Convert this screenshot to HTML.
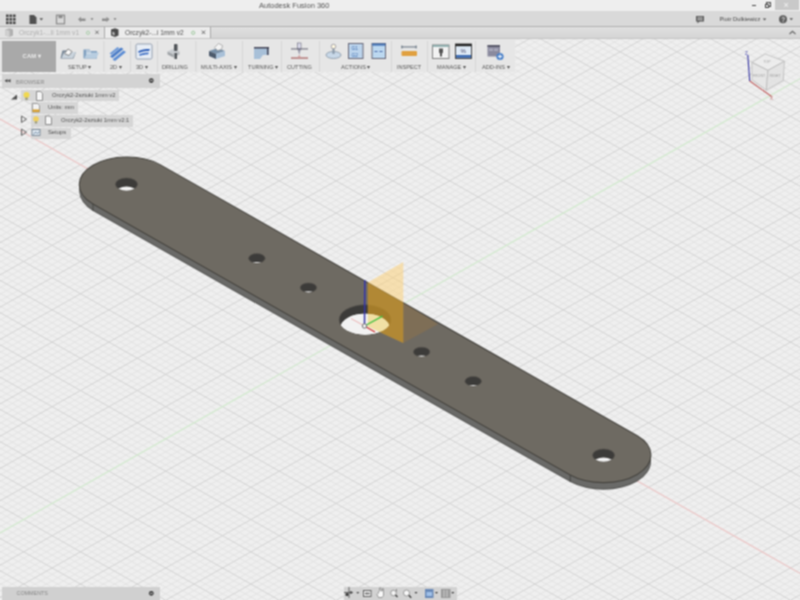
<!DOCTYPE html>
<html><head><meta charset="utf-8">
<style>
html,body{margin:0;padding:0;width:800px;height:600px;overflow:hidden;background:#ececec;font-family:"Liberation Sans",sans-serif;}
#wrap{position:absolute;left:0;top:0;width:800px;height:600px;filter:url(#bl);}
.a{position:absolute;}
.t{position:absolute;white-space:nowrap;line-height:1;}
</style></head><body>
<svg width="0" height="0" style="position:absolute"><filter id="bl" x="0" y="0" width="100%" height="100%" color-interpolation-filters="sRGB"><feConvolveMatrix order="3" kernelMatrix="1 2 1 2 4 2 1 2 1" divisor="16" edgeMode="duplicate"/></filter></svg>
<div id="wrap">
<svg width="800" height="600" viewBox="0 0 800 600" style="position:absolute;left:0;top:0" font-family="Liberation Sans, sans-serif">
<rect width="800" height="600" fill="#efefef"/>
<path d="M790.19 0.00L800.00 5.57M778.83 0.00L800.00 12.02M767.47 0.00L800.00 18.47M744.75 0.00L800.00 31.38M733.39 0.00L800.00 37.83M6.97 0.00L0.00 3.96M722.03 0.00L800.00 44.28M18.33 0.00L0.00 10.41M710.67 0.00L800.00 50.73M41.05 0.00L0.00 23.31M687.95 0.00L800.00 63.64M52.41 0.00L0.00 29.76M676.59 0.00L800.00 70.09M63.77 0.00L0.00 36.22M665.23 0.00L800.00 76.54M75.13 0.00L0.00 42.67M653.87 0.00L800.00 82.99M97.85 0.00L0.00 55.57M631.15 0.00L800.00 95.90M109.21 0.00L0.00 62.02M619.79 0.00L800.00 102.35M120.57 0.00L0.00 68.48M608.43 0.00L800.00 108.80M131.93 0.00L0.00 74.93M597.07 0.00L800.00 115.25M154.65 0.00L0.00 87.83M574.35 0.00L800.00 128.16M166.01 0.00L0.00 94.28M562.99 0.00L800.00 134.61M177.37 0.00L0.00 100.74M551.63 0.00L800.00 141.06M188.73 0.00L0.00 107.19M540.27 0.00L800.00 147.51M211.45 0.00L0.00 120.09M517.55 0.00L800.00 160.42M222.81 0.00L0.00 126.54M506.19 0.00L800.00 166.87M234.17 0.00L0.00 133.00M494.83 0.00L800.00 173.32M245.53 0.00L0.00 139.45M483.47 0.00L800.00 179.77M268.25 0.00L0.00 152.35M460.75 0.00L800.00 192.68M279.61 0.00L0.00 158.80M449.39 0.00L800.00 199.13M290.97 0.00L0.00 165.26M438.03 0.00L800.00 205.58M302.33 0.00L0.00 171.71M426.67 0.00L800.00 212.03M325.05 0.00L0.00 184.61M403.95 0.00L800.00 224.94M336.41 0.00L-0.00 191.06M392.59 0.00L800.00 231.39M347.77 0.00L0.00 197.52M381.23 0.00L800.00 237.84M359.13 0.00L0.00 203.97M369.87 0.00L800.00 244.29M381.85 0.00L0.00 216.87M347.15 0.00L800.00 257.20M393.21 0.00L0.00 223.32M335.79 0.00L800.00 263.65M404.57 0.00L0.00 229.78M324.43 0.00L800.00 270.10M415.93 0.00L0.00 236.23M313.07 0.00L800.00 276.55M438.65 0.00L-0.00 249.13M290.35 0.00L800.00 289.46M450.01 0.00L0.00 255.58M278.99 0.00L800.00 295.91M461.37 0.00L-0.00 262.04M267.63 0.00L800.00 302.36M472.73 0.00L0.00 268.49M256.27 0.00L800.00 308.81M495.45 0.00L0.00 281.39M233.55 0.00L800.00 321.72M506.81 0.00L0.00 287.84M222.19 0.00L800.00 328.17M518.17 0.00L0.00 294.30M210.83 0.00L800.00 334.62M529.53 0.00L0.00 300.75M199.47 0.00L800.00 341.07M552.25 0.00L0.00 313.65M176.75 0.00L800.00 353.98M563.61 0.00L0.00 320.10M165.39 0.00L800.00 360.43M574.97 0.00L0.00 326.56M154.03 0.00L800.00 366.88M586.33 0.00L0.00 333.01M142.67 0.00L800.00 373.33M609.05 0.00L0.00 345.91M119.95 0.00L800.00 386.24M620.41 0.00L0.00 352.36M108.59 0.00L800.00 392.69M631.77 0.00L0.00 358.82M97.23 0.00L800.00 399.14M643.13 0.00L0.00 365.27M85.87 0.00L800.00 405.59M665.85 0.00L0.00 378.17M63.15 0.00L800.00 418.50M677.21 0.00L0.00 384.62M51.79 0.00L800.00 424.95M688.57 0.00L0.00 391.08M40.43 0.00L800.00 431.40M699.93 0.00L0.00 397.53M29.07 0.00L800.00 437.85M722.65 0.00L0.00 410.43M6.35 0.00L800.00 450.76M734.01 0.00L0.00 416.88M0.00 2.84L800.00 457.21M745.37 0.00L0.00 423.34M0.00 9.30L800.00 463.66M756.73 0.00L0.00 429.79M-0.00 15.75L800.00 470.11M779.45 0.00L0.00 442.69M0.00 28.65L800.00 483.02M790.81 0.00L0.00 449.14M0.00 35.10L800.00 489.47M800.00 1.23L0.00 455.60M0.00 41.56L800.00 495.92M800.00 7.68L0.00 462.05M0.00 48.01L800.00 502.37M800.00 20.59L0.00 474.95M0.00 60.91L800.00 515.28M800.00 27.04L0.00 481.40M0.00 67.36L800.00 521.73M800.00 33.49L0.00 487.86M0.00 73.82L800.00 528.18M800.00 39.94L0.00 494.31M0.00 80.27L800.00 534.63M800.00 52.85L0.00 507.21M0.00 93.17L800.00 547.54M800.00 59.30L0.00 513.66M0.00 99.62L800.00 553.99M800.00 65.75L0.00 520.12M0.00 106.08L800.00 560.44M800.00 72.20L0.00 526.57M0.00 112.53L800.00 566.89M800.00 85.11L0.00 539.47M0.00 125.43L800.00 579.80M800.00 91.56L0.00 545.92M0.00 131.88L800.00 586.25M800.00 98.01L0.00 552.38M0.00 138.34L800.00 592.70M800.00 104.46L0.00 558.83M0.00 144.79L800.00 599.15M800.00 117.37L0.00 571.73M0.00 157.69L778.77 600.00M800.00 123.82L0.00 578.18M0.00 164.14L767.41 600.00M800.00 130.27L0.00 584.64M0.00 170.60L756.05 600.00M800.00 136.72L0.00 591.09M0.00 177.05L744.69 600.00M800.00 149.63L7.03 600.00M0.00 189.95L721.97 600.00M800.00 156.08L18.39 600.00M0.00 196.40L710.61 600.00M800.00 162.53L29.75 600.00M0.00 202.86L699.25 600.00M800.00 168.98L41.11 600.00M0.00 209.31L687.89 600.00M800.00 181.89L63.83 600.00M0.00 222.21L665.17 600.00M800.00 188.34L75.19 600.00M0.00 228.66L653.81 600.00M800.00 194.79L86.55 600.00M0.00 235.12L642.45 600.00M800.00 201.24L97.91 600.00M0.00 241.57L631.09 600.00M800.00 214.15L120.63 600.00M0.00 254.47L608.37 600.00M800.00 220.60L131.99 600.00M0.00 260.92L597.01 600.00M800.00 227.05L143.35 600.00M0.00 267.38L585.65 600.00M800.00 233.50L154.71 600.00M0.00 273.83L574.29 600.00M800.00 246.41L177.43 600.00M0.00 286.73L551.57 600.00M800.00 252.86L188.79 600.00M0.00 293.18L540.21 600.00M800.00 259.31L200.15 600.00M0.00 299.64L528.85 600.00M800.00 265.76L211.51 600.00M0.00 306.09L517.49 600.00M800.00 278.67L234.23 600.00M0.00 318.99L494.77 600.00M800.00 285.12L245.59 600.00M0.00 325.44L483.41 600.00M800.00 291.57L256.95 600.00M0.00 331.90L472.05 600.00M800.00 298.02L268.31 600.00M0.00 338.35L460.69 600.00M800.00 310.93L291.03 600.00M0.00 351.25L437.97 600.00M800.00 317.38L302.39 600.00M0.00 357.70L426.61 600.00M800.00 323.83L313.75 600.00M0.00 364.16L415.25 600.00M800.00 330.28L325.11 600.00M0.00 370.61L403.89 600.00M800.00 343.19L347.83 600.00M0.00 383.51L381.17 600.00M800.00 349.64L359.19 600.00M-0.00 389.96L369.81 600.00M800.00 356.09L370.55 600.00M0.00 396.42L358.45 600.00M800.00 362.54L381.91 600.00M-0.00 402.87L347.09 600.00M800.00 375.45L404.63 600.00M0.00 415.77L324.37 600.00M800.00 381.90L415.99 600.00M0.00 422.22L313.01 600.00M800.00 388.35L427.35 600.00M0.00 428.68L301.65 600.00M800.00 394.80L438.71 600.00M0.00 435.13L290.29 600.00M800.00 407.71L461.43 600.00M0.00 448.03L267.57 600.00M800.00 414.16L472.79 600.00M0.00 454.48L256.21 600.00M800.00 420.61L484.15 600.00M-0.00 460.94L244.85 600.00M800.00 427.06L495.51 600.00M0.00 467.39L233.49 600.00M800.00 439.97L518.23 600.00M0.00 480.29L210.77 600.00M800.00 446.42L529.59 600.00M0.00 486.74L199.41 600.00M800.00 452.87L540.95 600.00M0.00 493.20L188.05 600.00M800.00 459.32L552.31 600.00M0.00 499.65L176.69 600.00M800.00 472.23L575.03 600.00M0.00 512.55L153.97 600.00M800.00 478.68L586.39 600.00M0.00 519.00L142.61 600.00M800.00 485.13L597.75 600.00M0.00 525.46L131.25 600.00M800.00 491.58L609.11 600.00M0.00 531.91L119.89 600.00M800.00 504.49L631.83 600.00M0.00 544.81L97.17 600.00M800.00 510.94L643.19 600.00M0.00 551.26L85.81 600.00M800.00 517.39L654.55 600.00M0.00 557.72L74.45 600.00M800.00 523.84L665.91 600.00M0.00 564.17L63.09 600.00M800.00 536.75L688.63 600.00M0.00 577.07L40.37 600.00M800.00 543.20L699.99 600.00M0.00 583.52L29.01 600.00M800.00 549.65L711.35 600.00M0.00 589.98L17.65 600.00M800.00 556.10L722.71 600.00M0.00 596.43L6.29 600.00M800.00 569.01L745.43 600.00M800.00 575.46L756.79 600.00M800.00 581.91L768.15 600.00M800.00 588.36L779.51 600.00" stroke="#e0e0e0" stroke-width="0.8" fill="none"/>
<path d="M756.11 0.00L800.00 24.93M29.69 0.00L0.00 16.86M699.31 0.00L800.00 57.19M86.49 0.00L0.00 49.12M642.51 0.00L800.00 89.45M143.29 0.00L0.00 81.38M585.71 0.00L800.00 121.71M200.09 0.00L0.00 113.64M528.91 0.00L800.00 153.97M256.89 0.00L0.00 145.90M472.11 0.00L800.00 186.23M313.69 0.00L0.00 178.16M415.31 0.00L800.00 218.49M370.49 0.00L0.00 210.42M358.51 0.00L800.00 250.75M427.29 0.00L0.00 242.68M301.71 0.00L800.00 283.01M484.09 0.00L0.00 274.94M244.91 0.00L800.00 315.27M540.89 0.00L0.00 307.20M188.11 0.00L800.00 347.53M597.69 0.00L0.00 339.46M131.31 0.00L800.00 379.79M654.49 0.00L0.00 371.72M74.51 0.00L800.00 412.05M711.29 0.00L0.00 403.98M17.71 0.00L800.00 444.31M768.09 0.00L0.00 436.24M0.00 22.20L800.00 476.57M800.00 14.13L0.00 468.50M0.00 54.46L800.00 508.83M800.00 46.39L0.00 500.76M0.00 86.72L800.00 541.09M800.00 78.65L0.00 533.02M0.00 118.98L800.00 573.35M800.00 110.91L0.00 565.28M0.00 151.24L790.13 600.00M800.00 143.17L0.00 597.54M0.00 183.50L733.33 600.00M800.00 175.43L52.47 600.00M0.00 215.76L676.53 600.00M800.00 207.69L109.27 600.00M0.00 248.02L619.73 600.00M800.00 239.95L166.07 600.00M0.00 280.28L562.93 600.00M800.00 272.21L222.87 600.00M0.00 312.54L506.13 600.00M800.00 304.47L279.67 600.00M0.00 344.80L449.33 600.00M800.00 336.73L336.47 600.00M0.00 377.06L392.53 600.00M800.00 368.99L393.27 600.00M0.00 409.32L335.73 600.00M800.00 401.25L450.07 600.00M0.00 441.58L278.93 600.00M800.00 433.51L506.87 600.00M0.00 473.84L222.13 600.00M800.00 465.77L563.67 600.00M0.00 506.10L165.33 600.00M800.00 498.03L620.47 600.00M0.00 538.36L108.53 600.00M800.00 530.29L677.27 600.00M0.00 570.62L51.73 600.00M800.00 562.55L734.07 600.00M800.00 594.81L790.87 600.00" stroke="#d2d2d2" stroke-width="1.0" fill="none"/>
<path d="M0.00 118.98L800.00 573.35" stroke="#eec8c8" stroke-width="1.2"/>
<path d="M800.00 78.65L0.00 533.02" stroke="#d4ecd0" stroke-width="1.2"/>
<path d="M160.02 171.63L637.27 442.73A47.80 27.60 0 0 1 570.23 482.07L92.98 210.97A47.80 27.60 0 0 1 160.02 171.63Z" fill="#5d5d5b"/>
<path d="M160.02 170.13L637.27 441.23A47.80 27.60 0 0 1 570.23 480.57L92.98 209.47A47.80 27.60 0 0 1 160.02 170.13Z" fill="#6a6a68"/>
<path d="M160.02 164.63L637.27 435.73A47.80 27.60 0 0 1 570.23 475.07L92.98 203.97A47.80 27.60 0 0 1 160.02 164.63Z" fill="#6e6a62" stroke="#46443f" stroke-width="1.1"/>
<path d="M92.98 203.97L92.98 210.97" stroke="#3e3d3a" stroke-width="0.8"/>
<path d="M570.23 475.07L570.23 482.07" stroke="#3e3d3a" stroke-width="0.8"/>
<ellipse cx="126.50" cy="184.30" rx="11.00" ry="6.35" fill="#3c3b39" stroke="#55534e" stroke-width="0.6"/>
<clipPath id="h0"><ellipse cx="126.50" cy="184.30" rx="11.00" ry="6.35"/></clipPath>
<ellipse clip-path="url(#h0)" cx="126.50" cy="192.50" rx="10.45" ry="6.03" fill="#f2f2f2"/>
<ellipse cx="256.86" cy="258.35" rx="8.25" ry="4.76" fill="#3c3b39" stroke="#55534e" stroke-width="0.6"/>
<clipPath id="h148"><ellipse cx="256.86" cy="258.35" rx="8.25" ry="4.76"/></clipPath>
<ellipse clip-path="url(#h148)" cx="256.86" cy="266.55" rx="7.84" ry="4.53" fill="#f2f2f2"/>
<ellipse cx="308.44" cy="287.65" rx="8.25" ry="4.76" fill="#3c3b39" stroke="#55534e" stroke-width="0.6"/>
<clipPath id="h206"><ellipse cx="308.44" cy="287.65" rx="8.25" ry="4.76"/></clipPath>
<ellipse clip-path="url(#h206)" cx="308.44" cy="295.85" rx="7.84" ry="4.53" fill="#f2f2f2"/>
<ellipse cx="365.04" cy="319.80" rx="25.90" ry="14.95" fill="#3c3b39" stroke="#55534e" stroke-width="0.6"/>
<clipPath id="h271"><ellipse cx="365.04" cy="319.80" rx="25.90" ry="14.95"/></clipPath>
<ellipse clip-path="url(#h271)" cx="365.04" cy="328.00" rx="24.60" ry="14.21" fill="#f2f2f2"/>
<ellipse cx="421.63" cy="351.95" rx="8.25" ry="4.76" fill="#3c3b39" stroke="#55534e" stroke-width="0.6"/>
<clipPath id="h335"><ellipse cx="421.63" cy="351.95" rx="8.25" ry="4.76"/></clipPath>
<ellipse clip-path="url(#h335)" cx="421.63" cy="360.15" rx="7.84" ry="4.53" fill="#f2f2f2"/>
<ellipse cx="473.21" cy="381.25" rx="8.25" ry="4.76" fill="#3c3b39" stroke="#55534e" stroke-width="0.6"/>
<clipPath id="h393"><ellipse cx="473.21" cy="381.25" rx="8.25" ry="4.76"/></clipPath>
<ellipse clip-path="url(#h393)" cx="473.21" cy="389.45" rx="7.84" ry="4.53" fill="#f2f2f2"/>
<ellipse cx="603.57" cy="455.30" rx="11.00" ry="6.35" fill="#3c3b39" stroke="#55534e" stroke-width="0.6"/>
<clipPath id="h542"><ellipse cx="603.57" cy="455.30" rx="11.00" ry="6.35"/></clipPath>
<ellipse clip-path="url(#h542)" cx="603.57" cy="463.50" rx="10.45" ry="6.03" fill="#f2f2f2"/>
<clipPath id="ptop"><path d="M160.02 164.63L637.27 435.73A47.80 27.60 0 0 1 570.23 475.07L92.98 203.97A47.80 27.60 0 0 1 160.02 164.63Z"/></clipPath>
<path d="M367.75 282.5L403.3 262L403.3 343L367.75 326.5Z" fill="rgb(254,208,114)" fill-opacity="0.5"/>
<path clip-path="url(#ptop)" d="M367.75 282.5L403.3 262L403.3 343L367.75 326.5Z" fill="rgb(171,116,0)" fill-opacity="0.5"/>
<path clip-path="url(#ptop)" d="M403.3 302.5L438 324L403.3 343Z" fill="rgb(165,118,58)" fill-opacity="0.3"/>
<clipPath id="hl"><ellipse cx="365.04" cy="328.00" rx="24.60" ry="14.21"/></clipPath>
<g clip-path="url(#h271)"><g clip-path="url(#hl)"><rect x="330" y="290" width="80" height="60" fill="#f2f2f2"/>
<path d="M367.75 282.5L403.3 262L403.3 343L367.75 326.5Z" fill="rgb(240,210,100)" fill-opacity="0.55"/></g></g>
<path d="M351 318.5L364.5 326.0" stroke="#e8a0a0" stroke-width="0.8"/>
<path d="M364.5 326.0L364.8 280.3" stroke="#3434a8" stroke-width="1.5"/>
<path d="M364.5 326.0L382.5 316.2" stroke="#40c040" stroke-width="1.4"/>
<path d="M364.5 326.0L375 332" stroke="#d03030" stroke-width="1.4"/>
<circle cx="364.5" cy="326.0" r="2.2" fill="#f4f4f4" stroke="#606060" stroke-width="0.9"/>
<g opacity="0.9">
<path d="M751.9 62.4L765.2 53.9L784.4 61.3L767.9 70.4Z" fill="#ededed" stroke="#b4b4b4" stroke-width="0.8"/>
<path d="M751.9 62.4L767.9 70.4L766.3 90.1L751.9 79.5Z" fill="#e6e6e6" stroke="#b4b4b4" stroke-width="0.8"/>
<path d="M767.9 70.4L784.4 61.3L783.3 80.5L766.3 90.1Z" fill="#e2e2e2" stroke="#b4b4b4" stroke-width="0.8"/>
<text x="767" y="62.5" font-size="3.5" fill="#999" text-anchor="middle" transform="">TOP</text>
<text x="759" y="77" font-size="3.6" fill="#999" text-anchor="middle">FRONT</text>
<text x="775" y="77" font-size="3.6" fill="#999" text-anchor="middle">RIGHT</text>
</g>
<path d="M749.7 81L747.8 55" stroke="#3030a0" stroke-width="1.1"/>
<path d="M749.7 81L771.6 96.5" stroke="#c06060" stroke-width="1.1"/>
<text x="745" y="55" font-size="4.5" fill="#5050b0">Z</text>
<text x="770" y="100" font-size="4.5" fill="#c07070">X</text>
</svg>
<!-- title bar -->
<div class="a" style="left:0;top:0;width:800px;height:11px;background:#eeeeee"></div>
<div class="t" style="left:259px;top:1.5px;font-size:7.5px;color:#555">Autodesk Fusion 360</div>
<div class="a" style="left:752px;top:5px;width:4px;height:1.2px;background:#444"></div>
<div class="a" style="left:766px;top:2px;width:4.5px;height:4.5px;border:1px solid #444;border-top-width:1.5px;box-sizing:border-box"></div><div class="a" style="left:764.5px;top:3.5px;width:4.5px;height:4.5px;border:1px solid #444;border-top-width:1.5px;box-sizing:border-box;background:#eee"></div>
<div class="a" style="left:775px;top:0;width:24px;height:10px;background:#c9c9c9"></div>
<div class="t" style="left:783.5px;top:0.5px;font-size:9px;color:#f4f4f4">&#215;</div>
<!-- toolbar -->
<div class="a" style="left:0;top:11px;width:800px;height:15px;background:#d9d9d9"></div>
<div class="a" style="left:0;top:26px;width:800px;height:1px;background:#b0b0b0"></div>
<svg class="a" style="left:0;top:11px" width="800" height="16">
 <g fill="#484848">
  <rect x="6" y="3.5" width="2.6" height="2.6"/><rect x="9.5" y="3.5" width="2.6" height="2.6"/><rect x="13" y="3.5" width="2.6" height="2.6"/>
  <rect x="6" y="7" width="2.6" height="2.6"/><rect x="9.5" y="7" width="2.6" height="2.6"/><rect x="13" y="7" width="2.6" height="2.6"/>
  <rect x="6" y="10.5" width="2.6" height="2.6"/><rect x="9.5" y="10.5" width="2.6" height="2.6"/><rect x="13" y="10.5" width="2.6" height="2.6"/>
 </g>
 <path d="M29.5 4h4.5l2.5 2.5v6.5h-7z" fill="#505050"/>
 <path d="M39.5 7.2h3.6l-1.8 2.2z" fill="#505050"/>
 <rect x="56.5" y="4.2" width="8" height="8.6" fill="none" stroke="#8a8a8a" stroke-width="1.2"/>
 <rect x="58.5" y="4.2" width="4" height="3" fill="#8a8a8a"/>
 <path d="M78 8.3l3-2.5v1.6h4.5v2.6h-4.5v1.3z" fill="#8f8f8f"/>
 <path d="M90.5 7.3h3l-1.5 2z" fill="#7a7a7a"/>
 <path d="M109.5 8.3l-3-2.5v1.6h-4.5v2.6h4.5v1.3z" fill="#8f8f8f"/>
 <path d="M113.5 7.3h3l-1.5 2z" fill="#7a7a7a"/>
 <path d="M696 5h8v5.5h-4.5l-2 2v-2h-1.5z" fill="#5a5a5a"/>
 <rect x="697.3" y="6.3" width="5.4" height="0.9" fill="#d9d9d9"/><rect x="697.3" y="8.2" width="5.4" height="0.9" fill="#d9d9d9"/>
 <circle cx="783" cy="8.3" r="4" fill="#5c5c5c"/>
 <text x="781.3" y="10.8" font-size="6.5" fill="#ddd" font-weight="bold">?</text>
 <path d="M789.5 7.3h3.5l-1.75 2z" fill="#505050"/>
 <path d="M762.8 7.6h3.5l-1.75 2z" fill="#505050"/>
</svg>
<div class="t" style="left:719.5px;top:17.2px;font-size:5.8px;color:#4a4a4a">Piotr Dulkiewicz</div>
<!-- tabs row -->
<div class="a" style="left:0;top:27px;width:800px;height:11px;background:linear-gradient(#e0e0e0,#d4d4d4)"></div>
<div class="a" style="left:0;top:27px;width:104px;height:11px;background:#e2e2e2"></div>
<div class="a" style="left:104px;top:27px;width:1px;height:11px;background:#a8a8a8"></div>
<div class="a" style="left:105px;top:27px;width:105px;height:11px;background:#ececec"></div>
<div class="a" style="left:210px;top:27px;width:1px;height:11px;background:#a8a8a8"></div>
<div class="a" style="left:0;top:38px;width:800px;height:1px;background:#c4c4c4"></div>
<svg class="a" style="left:0;top:27px" width="800" height="12">
 <path d="M5.5 2.5l4-1.2 3.5 1.2v6l-3.5 1.5-4-1.5z" fill="#b0b0b0"/><path d="M5.5 2.5l4 1.3v6.5l-4-1.8z" fill="#d0d0d0"/>
 <path d="M111 2.5l4-1.2 3.5 1.2v6l-3.5 1.5-4-1.5z" fill="#4a4a4a"/><path d="M112.3 4.5l2.3 1v3l-2.3-1z" fill="#bbb"/>
 <circle cx="88" cy="5.8" r="1.6" fill="none" stroke="#9cc89c" stroke-width="0.8"/>
 <circle cx="193.2" cy="5.8" r="1.6" fill="none" stroke="#8cc08c" stroke-width="0.8"/>
 <path d="M95.3 3.6l3.4 3.4M98.7 3.6l-3.4 3.4" stroke="#666" stroke-width="0.9"/>
 <path d="M201.8 3.6l3.4 3.4M205.2 3.6l-3.4 3.4" stroke="#555" stroke-width="0.9"/>
 <path d="M789.5 7l3-2.7 3 2.7" fill="none" stroke="#666" stroke-width="1.1"/>
</svg>
<div class="t" style="left:19px;top:30.3px;font-size:6.6px;color:#b0b0b0">Orczyk1-...li 1mm v1</div>
<div class="t" style="left:125px;top:30.3px;font-size:6.6px;color:#505050">Orczyk2-...i 1mm v2</div>
<!-- ribbon -->
<div class="a" style="left:0;top:39px;width:515px;height:33px;background:#e6e6e6"></div>
<div class="a" style="left:2px;top:41px;width:54px;height:31px;background:#a9a9a9"></div>
<div class="t" style="left:22.5px;top:54.3px;font-size:5.8px;color:#ececec;font-weight:bold;letter-spacing:0.2px">CAM &#9662;</div>
<div id="seps"></div>
<svg class="a" style="left:0;top:39px" width="520" height="34">
 <g fill="#d2d2d2">
  <rect x="103.5" y="2" width="0.8" height="31"/><rect x="130" y="2" width="0.8" height="31"/><rect x="157" y="2" width="0.8" height="31"/>
  <rect x="195.5" y="2" width="0.8" height="31"/><rect x="242" y="2" width="0.8" height="31"/><rect x="281" y="2" width="0.8" height="31"/>
  <rect x="319" y="2" width="0.8" height="31"/><rect x="391" y="2" width="0.8" height="31"/><rect x="427" y="2" width="0.8" height="31"/>
  <rect x="475" y="2" width="0.8" height="31"/>
 </g>
 <!-- setup icons -->
 <path d="M60.5 19.5l2-8h7l1.5 1.5h5l-2.5 6.5z" fill="#6e7e8e"/>
 <path d="M61.5 19l2.5-6h12l-3 6z" fill="#c9d3dc"/>
 <path d="M64.5 14.5l3.5-4.5 4 2.5-3 4z" fill="#fafafa" stroke="#444" stroke-width="0.6"/>
 <path d="M83.5 19.5v-9h6l1.5 1.5h6v7.5z" fill="#7f9fbf"/>
 <path d="M84.5 19l2.5-5.5h12l-2.5 5.5z" fill="#b8cde0"/>
 <rect x="86" y="11.5" width="5" height="1" fill="#e8eef4"/><rect x="86" y="13.5" width="5" height="1" fill="#e8eef4"/>
 <!-- 2D -->
 <path d="M110 17.5l11-9 2.5 1.5-11 9z" fill="#4a7cc8"/>
 <path d="M112.5 20.5l11-9 2.5 1.5-11 9z" fill="#5b8cd4"/>
 <path d="M109.5 14.5l8-6.5 2 1.2-8 6.5z" fill="#6f9ad8"/>
 <!-- 3D -->
 <rect x="136" y="5" width="16" height="15" rx="1.5" fill="#e8eef6" stroke="#8a96a8" stroke-width="0.9"/>
 <path d="M138 12.5c3-2 7-2.5 12-2.5l-1 2c-4 0-7 .5-10 2z" fill="#3060b8"/>
 <path d="M139 15.5c3-1.5 6-2 10-2l-1 2c-3 0-6 .5-8 1.5z" fill="#4a78c8"/>
 <!-- drilling -->
 <path d="M167.5 12.5l6-3 6 3-6 3z" fill="#c8ccd0"/>
 <path d="M167.5 12.5v3l6 3v-3z" fill="#a0a4a8"/><path d="M179.5 12.5v3l-6 3v-3z" fill="#b4b8bc"/>
 <rect x="174" y="5" width="3.5" height="7" rx="1" fill="#505458"/>
 <rect x="174.5" y="14" width="2.5" height="6" fill="#505458"/>
 <!-- multi-axis -->
 <path d="M209 12l9-3 7 3-9 3z" fill="#7890a8"/>
 <path d="M209 12v5l7 3v-5z" fill="#4c5a6c"/><path d="M225 12v5l-9 3v-5z" fill="#a8c0d8"/>
 <path d="M214.5 8.5l4-4 4 2-1 4-4 1z" fill="#f4f4f4" stroke="#888" stroke-width="0.6"/>
 <!-- turning -->
 <path d="M254 8h15v8h-6l-3 4h-6z" fill="#a8c0d8"/>
 <rect x="254" y="8" width="15" height="1.5" fill="#445"/>
 <rect x="267" y="9" width="1.5" height="7" fill="#445"/>
 <!-- cutting -->
 <rect x="297.5" y="4" width="3.5" height="6" fill="#dde" stroke="#667" stroke-width="0.6"/>
 <path d="M297.5 10h3.5l-1.75 6z" fill="#99a"/>
 <rect x="291" y="9.5" width="17" height="0.9" fill="#556"/>
 <rect x="291" y="18.5" width="17" height="1.1" fill="#a05050"/>
 <path d="M299.25 16l-2 2.5h4z" fill="#d0a0a0"/>
 <!-- actions -->
 <ellipse cx="333.5" cy="16" rx="7.5" ry="3.5" fill="#c8d8e8" stroke="#7a8a9a" stroke-width="0.7"/>
 <rect x="332.5" y="8" width="2" height="7" fill="#8898a8"/>
 <circle cx="333.5" cy="7.5" r="2.3" fill="#fff8e0" stroke="#778" stroke-width="0.6"/>
 <rect x="348.5" y="4.5" width="14.5" height="15" fill="#bcd4ec" stroke="#667" stroke-width="1"/>
 <text x="351.5" y="10.8" font-size="4.8" fill="#4070b0">G1</text><text x="351.5" y="17.5" font-size="4.8" fill="#4070b0">G2</text>
 <rect x="372" y="4.5" width="13.5" height="15" fill="#bcd8f0" stroke="#667" stroke-width="1"/>
 <rect x="372" y="4.5" width="13.5" height="2.2" fill="#4a78b8"/>
 <rect x="374.5" y="12" width="3" height="1" fill="#4a68a8"/><rect x="379.5" y="12" width="3" height="1" fill="#4a68a8"/>
 <!-- inspect -->
 <rect x="401.5" y="7.5" width="15" height="0.9" fill="#506070"/>
 <rect x="401.5" y="6.5" width="0.9" height="3" fill="#506070"/><rect x="415.6" y="6.5" width="0.9" height="3" fill="#506070"/>
 <rect x="401.5" y="12" width="15.5" height="5" rx="1" fill="#e0a040"/>
 <!-- manage -->
 <rect x="432.5" y="6" width="16.5" height="13.5" fill="#f2f2f2" stroke="#777" stroke-width="0.9"/>
 <rect x="432.5" y="6" width="16.5" height="1.8" fill="#8aa"/>
 <path d="M439 9.5h4v4l-1 1v3h-2v-3l-1-1z" fill="#555"/>
 <rect x="455.5" y="5" width="16" height="14.5" fill="#dfeaf6" stroke="#333" stroke-width="0.9"/>
 <rect x="455.5" y="5" width="16" height="2.2" fill="#222"/>
 <rect x="456" y="16" width="15" height="2.8" fill="#3c6ab0"/>
 <text x="460.5" y="14.3" font-size="6" fill="#446">%</text>
 <!-- add-ins -->
 <rect x="487.5" y="6" width="12.5" height="11.5" fill="#8a8a9e"/>
 <rect x="487.5" y="6" width="12.5" height="2" fill="#5a5a6a"/>
 <rect x="489" y="9.5" width="4" height="2.5" fill="#a8a8ba"/><rect x="494" y="9.5" width="4" height="2.5" fill="#a8a8ba"/>
 <circle cx="500" cy="17.5" r="3.6" fill="#4a80c8"/>
 <rect x="499.5" y="15.5" width="1" height="4" fill="#fff"/><rect x="498" y="17" width="4" height="1" fill="#fff"/>
</svg>
<div class="t" style="left:68px;top:64.5px;font-size:5.6px;color:#555">SETUP &#9662;</div>
<div class="t" style="left:110px;top:64.5px;font-size:5.6px;color:#555">2D &#9662;</div>
<div class="t" style="left:136px;top:64.5px;font-size:5.6px;color:#555">3D &#9662;</div>
<div class="t" style="left:162px;top:64.5px;font-size:5.6px;color:#555">DRILLING</div>
<div class="t" style="left:201px;top:64.5px;font-size:5.6px;color:#555">MULTI-AXIS &#9662;</div>
<div class="t" style="left:248px;top:64.5px;font-size:5.6px;color:#555">TURNING &#9662;</div>
<div class="t" style="left:287px;top:64.5px;font-size:5.6px;color:#555">CUTTING</div>
<div class="t" style="left:341px;top:64.5px;font-size:5.6px;color:#555">ACTIONS &#9662;</div>
<div class="t" style="left:397px;top:64.5px;font-size:5.6px;color:#555">INSPECT</div>
<div class="t" style="left:437px;top:64.5px;font-size:5.6px;color:#555">MANAGE &#9662;</div>
<div class="t" style="left:482px;top:64.5px;font-size:5.6px;color:#555">ADD-INS &#9662;</div>

<!-- browser -->
<div class="a" style="left:2px;top:73.5px;width:158px;height:14px;background:#d3d3d3"></div>
<div class="t" style="left:16px;top:79.5px;font-size:5.5px;color:#8a8a8a">BROWSER</div>
<svg class="a" style="left:0;top:74px" width="170" height="14">
 <path d="M4.5 6.7l3-1.8v3.6zM7.5 6.7l3-1.8v3.6z" fill="#444"/>
 <circle cx="151.3" cy="6.6" r="2.4" fill="#3a3a3a"/>
 <rect x="149.8" y="6.2" width="3" height="0.8" fill="#ccc"/>
</svg>
<div class="a" style="left:21px;top:90.2px;width:98px;height:10.5px;background:#d6d6d6"></div>
<div class="a" style="left:31px;top:102.2px;width:46.5px;height:12px;background:#d6d6d6"></div>
<div class="a" style="left:31px;top:115.2px;width:101.5px;height:11.5px;background:#d6d6d6"></div>
<div class="a" style="left:31px;top:127.7px;width:40px;height:11.5px;background:#d6d6d6"></div>
<svg class="a" style="left:0;top:87.2px" width="140" height="56">
 <path d="M11 12.5l6-5v5z" fill="#505050"/>
 <circle cx="26.5" cy="8" r="3" fill="#f0d850"/><rect x="25.3" y="10.5" width="2.4" height="2.5" fill="#9a9a7a"/>
 <path d="M36.5 4.5h4l2 2v7h-6z" fill="#f6f6f6" stroke="#777" stroke-width="0.8"/>
 <path d="M32.5 16.5h5l2 2v6.5h-7z" fill="#f2f2f2" stroke="#888" stroke-width="0.8"/>
 <rect x="32.5" y="22.5" width="7" height="2.5" fill="#d8a030"/>
 <path d="M21.5 29v6.5l5-3.25z" fill="none" stroke="#555" stroke-width="0.9"/>
 <circle cx="36" cy="32" r="2.8" fill="#f0d060"/><rect x="34.8" y="34.3" width="2.4" height="2.2" fill="#9a9a7a"/>
 <path d="M45.5 29h4l2 2v6.5h-6z" fill="#f6f6f6" stroke="#777" stroke-width="0.8"/>
 <path d="M21.5 42v6.5l5-3.25z" fill="none" stroke="#555" stroke-width="0.9"/>
 <rect x="32" y="42.5" width="8" height="6" fill="#dfe8f0" stroke="#6a7a8a" stroke-width="0.8"/>
 <path d="M33.5 47.5l2-2.5 2 1.5 2-2" fill="none" stroke="#4a6a8a" stroke-width="0.7"/>
</svg>
<div class="t" style="left:52px;top:92.7px;font-size:5.8px;color:#505050">Orczyk2-2sztuki 1mm v2</div>
<div class="t" style="left:48px;top:105.2px;font-size:5.8px;color:#505050">Units: mm</div>
<div class="t" style="left:61px;top:117.9px;font-size:5.8px;color:#505050">Orczyk2-2sztuki 1mm v2:1</div>
<div class="t" style="left:48px;top:130.2px;font-size:5.8px;color:#505050">Setups</div>

<!-- comments -->
<div class="a" style="left:2px;top:587px;width:158px;height:13px;background:#d0d0d0"></div>
<div class="t" style="left:16.5px;top:590.8px;font-size:5.4px;color:#888">COMMENTS</div>
<svg class="a" style="left:0;top:587px" width="170" height="13">
 <circle cx="151.3" cy="6.3" r="2.4" fill="#3a3a3a"/>
 <rect x="149.8" y="5.9" width="3" height="0.8" fill="#ccc"/>
</svg>
<div class="a" style="left:344px;top:587px;width:113px;height:13px;background:#d2d2d2"></div>
<svg class="a" style="left:340px;top:586px" width="120" height="14">
 <path d="M9 1v11M4 6.5h9" stroke="#555" stroke-width="0.9"/>
 <circle cx="7" cy="8.5" r="1.6" fill="#333"/><circle cx="11" cy="6.5" r="1.2" fill="#444"/>
 <path d="M16.3 6h3l-1.5 1.8z" fill="#444"/>
 <rect x="23.5" y="4.5" width="7.5" height="6" fill="#f4f4f4" stroke="#555" stroke-width="0.9"/>
 <rect x="25" y="6.5" width="4.5" height="2" fill="#777"/>
 <path d="M39.5 4.5v-2.5h1.5v3h1.2v-2.2h1.3v6.7l-1.5 2h-3.5l-1.5-3 1-1z" fill="#f8f8f8" stroke="#666" stroke-width="0.6"/>
 <circle cx="53.5" cy="7" r="2.8" fill="#f4f4f4" stroke="#777" stroke-width="0.7"/>
 <path d="M55.5 9l2 2" stroke="#333" stroke-width="1.3"/><path d="M56.5 3v2.5" stroke="#777" stroke-width="0.8"/>
 <circle cx="66.5" cy="7" r="3" fill="#f8f8f8" stroke="#777" stroke-width="0.7"/>
 <path d="M68.8 9.3l2.4 2.4" stroke="#333" stroke-width="1.3"/>
 <path d="M74.5 6h3l-1.5 1.8z" fill="#333"/>
 <rect x="85" y="3" width="8.5" height="9" fill="#6a8ab8"/><rect x="86.5" y="6" width="5.5" height="4" fill="#a0c0e8"/>
 <path d="M95 6h3l-1.5 1.8z" fill="#333"/>
 <rect x="101" y="3" width="9.5" height="9" fill="#9a9a9a"/><rect x="103.5" y="4" width="1" height="7" fill="#d0d0d0"/><rect x="106.5" y="4" width="1" height="7" fill="#d0d0d0"/>
 <path d="M111.3 6h3l-1.5 1.8z" fill="#333"/>
</svg>

</div>
</body></html>
